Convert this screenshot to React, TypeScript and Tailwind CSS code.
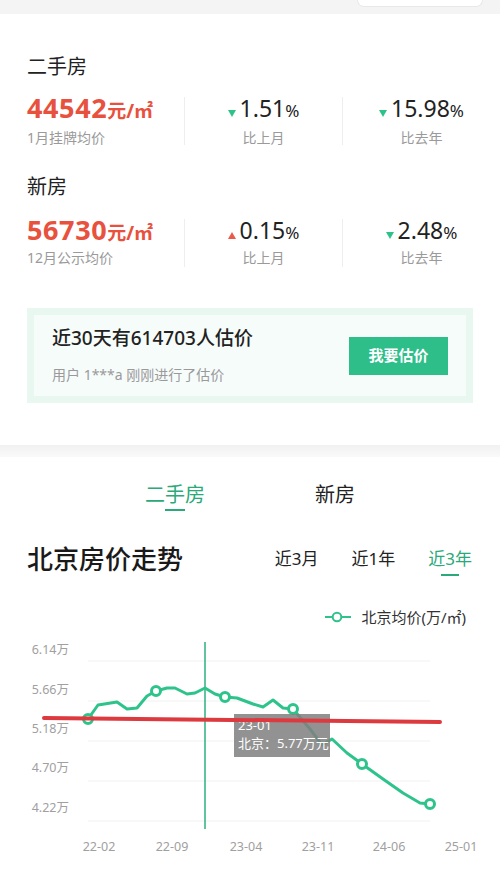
import React from 'react'

const FONT = { fontFamily: '"Noto Sans", "Noto Sans CJK SC", sans-serif' }

const STATS = [
  {
    title: '二手房',
    price: '44542',
    label: '1月挂牌均价',
    changes: [
      { dir: 'down', value: '1.51', label: '比上月' },
      { dir: 'down', value: '15.98', label: '比去年' },
    ],
  },
  {
    title: '新房',
    price: '56730',
    label: '12月公示均价',
    changes: [
      { dir: 'up', value: '0.15', label: '比上月' },
      { dir: 'down', value: '2.48', label: '比去年' },
    ],
  },
]

// chart coordinates are page y - 600
const POINTS: [number, number][] = [
  [88, 118], [98, 104], [117, 101], [127, 108], [137, 107], [147, 95], [156, 90],
  [167, 87], [175, 87], [187, 93], [195, 92], [205, 87], [215, 93], [225, 96],
  [237, 97], [253, 103], [263, 106], [273, 99], [283, 107], [293, 108], [310, 128],
  [322, 144], [332, 138], [347, 152], [362, 163], [383, 178], [403, 192], [420, 202],
  [430, 203],
]
const MARKERS = [0, 6, 13, 19, 24, 28]
const Y_LABELS = ['6.14万', '5.66万', '5.18万', '4.70万', '4.22万']
const X_LABELS: [number, string][] = [
  [99, '22-02'], [172, '22-09'], [246, '23-04'], [318, '23-11'], [389, '24-06'], [461, '25-01'],
]

function Arrow({ dir }: { dir: string }) {
  return (
    <svg width="8" height="7" viewBox="0 0 8 7" className="mr-[4px] mb-[6px]">
      {dir === 'down' ? (
        <polygon points="0,0 8,0 4,7" fill="#2ec28b" />
      ) : (
        <polygon points="0,7 8,7 4,0" fill="#ea5a4a" />
      )}
    </svg>
  )
}

function StatBlock({ s, first }: { s: (typeof STATS)[number]; first: boolean }) {
  return (
    <div>
      <div className={`text-[20px] leading-[28px] text-[#222] ${first ? '' : 'mt-[25px]'}`}>{s.title}</div>
      <div className={`grid grid-cols-[157px_158px_1fr] items-start ${first ? 'mt-[12px]' : 'mt-[14px]'}`}>
        <div>
          <div className="flex items-baseline h-[30px] text-[#e8513d] font-bold">
            <span className="text-[27px] leading-[30px] tracking-[0.6px]">{s.price}</span>
            <span className="text-[19px]">元/㎡</span>
          </div>
          <div className={`text-[14px] leading-[20px] text-[#9a9a9a] ${first ? 'mt-[5px]' : 'mt-[3px]'}`}>{s.label}</div>
        </div>
        {s.changes.map((c, i) => (
          <div key={i} className="h-[48px] mt-[4px] flex flex-col items-center border-l border-[#eeeeee]">
            <div className="flex items-baseline h-[30px] -mt-[4px] shrink-0 text-[#222]">
              <Arrow dir={c.dir} />
              <span className="text-[23px] leading-[30px]">{c.value}</span>
              <span className="text-[17px]">%</span>
            </div>
            <div className={`shrink-0 text-[14px] leading-[20px] text-[#9a9a9a] ${first ? 'mt-[5px]' : 'mt-[3px]'}`}>{c.label}</div>
          </div>
        ))}
      </div>
    </div>
  )
}

function Chart() {
  const line = POINTS.map((p) => p.join(',')).join(' ')
  return (
    <svg width="500" height="244" viewBox="0 26 500 244" className="block">
      {[60, 100, 140, 180, 220].map((y) => (
        <line key={y} x1="88" x2="430" y1={y} y2={y} stroke="#f1f1f1" strokeWidth="1" />
      ))}
      {Y_LABELS.map((t, i) => (
        <text key={t} x="69" y={50 + i * 39.3} textAnchor="end" dominantBaseline="middle" fontSize="12.5" fill="#a0a0a0">
          {t}
        </text>
      ))}
      {X_LABELS.map(([x, t]) => (
        <text key={t} x={x} y="247" textAnchor="middle" dominantBaseline="middle" fontSize="12.5" fill="#a0a0a0">
          {t}
        </text>
      ))}
      <line x1="205" x2="205" y1="41" y2="228" stroke="#2bb27e" strokeWidth="1.5" />
      <polyline points={line} fill="none" stroke="#2fc38c" strokeWidth="3" strokeLinejoin="round" />
      {MARKERS.map((i) => (
        <circle key={i} cx={POINTS[i][0]} cy={POINTS[i][1]} r="4.5" fill="#fff" stroke="#2fc38c" strokeWidth="3" />
      ))}
      <rect x="234" y="113" width="96" height="43" fill="#7f7f7f" opacity="0.85" />
      <text x="238" y="126" fontSize="13" fill="#fff" dominantBaseline="middle">23-01</text>
      <text x="238" y="144" fontSize="13" fill="#fff" dominantBaseline="middle">北京：5.77万元</text>
      <line x1="44" y1="117" x2="440" y2="121" stroke="#dd3a40" strokeWidth="4" strokeLinecap="round" />
    </svg>
  )
}

export default function App() {
  return (
    <div className="w-[500px] h-[870px] overflow-hidden bg-white" style={FONT}>
      <div className="h-[14px] bg-[#f4f4f4] flex items-start justify-end pr-[17px]">
        <div className="w-[126px] h-[7px] bg-white rounded-b-[14px] border border-t-0 border-[#e8e8e8]" />
      </div>

      <div className="pt-[39px] pl-[27px] pb-[42px]">
        {STATS.map((s, i) => (
          <StatBlock key={s.title} s={s} first={i === 0} />
        ))}

        <div className="mt-[40px] mr-[27px] h-[95px] bg-[#e8f8f1] p-[7px]">
          <div className="h-full bg-[#f6fcfa] flex items-center justify-between pl-[18px] pr-[18px]">
            <div>
              <div className="text-[19px] leading-[24px] font-medium text-[#222]">近30天有614703人估价</div>
              <div className="text-[14px] leading-[20px] text-[#9a9a9a] mt-[15px]">用户 1***a 刚刚进行了估价</div>
            </div>
            <div className="w-[99px] h-[38px] bg-[#2dbe89] flex items-center justify-center text-white text-[15px] font-bold">
              我要估价
            </div>
          </div>
        </div>
      </div>

      <div className="h-[12px] bg-gradient-to-b from-[#f1f1f1] to-[#fafafa]" />

      <div className="pt-[24px]">
        <div className="flex justify-center gap-[110px]">
          <div className="flex flex-col items-center">
            <span className="text-[20px] leading-[28px] text-[#2aa979]">二手房</span>
            <span className="w-[20px] h-[2px] bg-[#2aa979]" />
          </div>
          <div className="text-[20px] leading-[28px] text-[#222]">新房</div>
        </div>

        <div className="mt-[30px] pl-[27px] pr-[28px] flex items-center justify-between">
          <div className="text-[26px] leading-[36px] font-medium text-[#1a1a1a]">北京房价走势</div>
          <div className="flex gap-[33px] text-[17px] leading-[24px] text-[#222]">
            <span>近3月</span>
            <span>近1年</span>
            <span className="relative text-[#2aa979]">
              近3年
              <span className="absolute left-[13px] -bottom-[5px] w-[18px] h-[2px] bg-[#2aa979]" />
            </span>
          </div>
        </div>

        <div className="mt-[30px] flex items-center justify-end pr-[34px] h-[20px]">
          <svg width="26" height="12" viewBox="0 0 26 12" className="mr-[10px]">
            <line x1="0" y1="6" x2="26" y2="6" stroke="#2fc38c" strokeWidth="2" />
            <circle cx="12" cy="6" r="4.3" fill="#fff" stroke="#2fc38c" strokeWidth="2" />
          </svg>
          <span className="text-[15px] text-[#333]">北京均价(万/㎡)</span>
        </div>

        <Chart />
      </div>
    </div>
  )
}
